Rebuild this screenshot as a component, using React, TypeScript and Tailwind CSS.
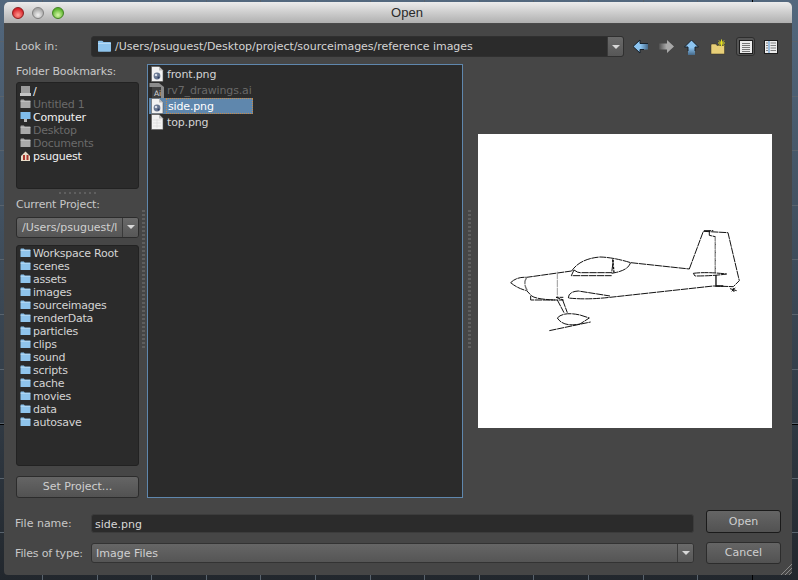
import React from 'react';

const projectDirs = [
  'Workspace Root',
  'scenes',
  'assets',
  'images',
  'sourceimages',
  'renderData',
  'particles',
  'clips',
  'sound',
  'scripts',
  'cache',
  'movies',
  'data',
  'autosave',
];

const Folder: React.FC<{ tone?: 'blue' | 'gray'; className?: string }> = ({
  tone = 'blue',
  className = 'w-[11px] h-[10px]',
}) => (
  <svg viewBox="0 0 11 10" className={`${className} shrink-0`}>
    <path
      d="M0.5 2 V1.2 Q0.5 0.5 1.2 0.5 H3.8 L4.8 1.6 H10 Q10.5 1.6 10.5 2.2 V8.5 Q10.5 9 10 9 H1 Q0.5 9 0.5 8.5 Z"
      fill={tone === 'blue' ? '#8fc4ec' : '#a9a9a9'}
    />
    <path d="M0.5 3 H10.5 V2.6 H0.5 Z" fill={tone === 'blue' ? '#dff0fb' : '#d4d4d4'} />
  </svg>
);

const DocIcon: React.FC<{ blank?: boolean }> = ({ blank }) => (
  <svg viewBox="0 0 14 16" className="w-[14px] h-[16px] shrink-0">
    <path d="M1.5 0.5 H9 L13 4.5 V15.5 H1.5 Z" fill="#f2f2f2" stroke="#555" strokeWidth="0.6" />
    <path d="M9 0.5 V4.5 H13 Z" fill="#bdbdbd" />
    {blank ? (
      <path d="M3 6 H11 M3 9 H11 M3 12 H11 M7 5 V14" stroke="#dadada" strokeWidth="0.7" />
    ) : (
      <>
        <circle cx="7" cy="10" r="3.4" fill="#66758f" />
        <circle cx="6" cy="9" r="1.3" fill="#d7dce8" />
        <circle cx="8.5" cy="11.5" r="1" fill="#2f3e66" />
      </>
    )}
  </svg>
);

const AiIcon = () => (
  <svg viewBox="0 0 16 16" className="w-[16px] h-[16px] shrink-0">
    <path d="M0.5 1 H10 L15 5 V16 H3 V5 H0.5 Z" fill="#8b8b8b" />
    <path d="M3 5 H12 V16 H3 Z" fill="#3f3f3f" />
    <text x="5" y="14" fontSize="7.5" fill="#d8d8d8" fontFamily="'DejaVu Sans', sans-serif">
      Ai
    </text>
  </svg>
);

const ComboArrow = () => (
  <div className="w-[16px] h-full flex items-center justify-center border-l border-[#3a3a3a] bg-gradient-to-b from-[#6a6a6a] to-[#575757]">
    <div className="w-0 h-0 border-l-[4px] border-r-[4px] border-t-[4px] border-l-transparent border-r-transparent border-t-[#d8d8d8]" />
  </div>
);

const DialogButton: React.FC<{ label: string; className: string }> = ({ label, className }) => (
  <div
    className={`${className} flex items-center justify-center pt-px rounded-[3px] border bg-gradient-to-b from-[#656565] to-[#525252] text-[11px] text-[#cfcfcf]`}
  >
    {label}
  </div>
);

const Sash = () => (
  <div className="w-[5px] h-full flex flex-col items-center pt-[146px]">
    <div className="w-[3px] h-[140px] bg-[repeating-linear-gradient(to_bottom,#5f5f5f_0px,#5f5f5f_2px,transparent_2px,transparent_4px)]" />
  </div>
);

const Arrow: React.FC<{ dir: 'left' | 'right' | 'up'; gray?: boolean; className?: string }> = ({
  dir,
  gray,
  className = '',
}) => {
  const id = `fade-${dir}`;
  const base = gray ? '#a8a8a8' : '#8cc4f0';
  const shapes = {
    left: { body: 'M1 7.5 L8 1 V4.5 H16 V10.5 H8 V14 Z', head: 'M16 4.5 H8 V1 L1 7.5 L8 14 V10.5 H12' },
    right: { body: 'M15 7.5 L8 1 V4.5 H0 V10.5 H8 V14 Z', head: 'M8 4.5 V1 L15 7.5 L8 14 V10.5' },
    up: { body: 'M7.5 1 L14.5 8 H11 V16 H4 V8 H0.5 Z', head: 'M4 12 V8 H0.5 L7.5 1 L14.5 8 H11 V12' },
  };
  return (
    <svg viewBox="0 0 16 16" className={`w-[16px] h-[16px] shrink-0 ${className}`}>
      <defs>
        <linearGradient
          id={id}
          x1={dir === 'right' ? '1' : '0'}
          x2={dir === 'right' ? '0' : dir === 'up' ? '0' : '1'}
          y1="0"
          y2={dir === 'up' ? '1' : '0'}
        >
          <stop offset="0" stopColor={base} />
          <stop offset="0.5" stopColor={base} />
          <stop offset="1" stopColor={gray ? '#505050' : '#45698a'} />
        </linearGradient>
      </defs>
      <path d={shapes[dir].body} fill={`url(#${id})`} />
      {!gray && <path d={shapes[dir].head} fill="none" stroke="#16202a" strokeWidth="1" />}
    </svg>
  );
};

const NewFolderIcon = () => (
  <svg viewBox="0 0 16 16" className="w-[16px] h-[16px] shrink-0 ml-[10px]">
    <path d="M1 6 Q1 5 2 5 H6 L7 6.5 H14.5 V15 H1 Z" fill="#e8cf78" stroke="#3a3320" strokeWidth="0.5" />
    <path d="M11.5 0.5 V7.5 M8 4 H15 M9 1.5 L14 6.5 M14 1.5 L9 6.5" stroke="#e6e020" strokeWidth="1" />
  </svg>
);

const DetailIcon: React.FC<{ split?: boolean }> = ({ split }) => (
  <svg viewBox="0 0 14 14" className="w-[14px] h-[14px]">
    <rect x="0.5" y="0.5" width="13" height="13" fill="#ececec" stroke="#1d1d1d" />
    {split ? (
      <>
        <path d="M2 3 H4 M2 5.5 H4 M2 8 H4 M2 10.5 H4" stroke="#7f7f7f" />
        <path d="M5 1 V13" stroke="#4d8fd0" />
        <path d="M6.5 3 H12 M6.5 5.5 H12 M6.5 8 H12 M6.5 10.5 H12" stroke="#7f7f7f" />
      </>
    ) : (
      <path d="M3 3.5 H11 M3 5.5 H11 M3 7.5 H11 M3 9.5 H11 M3 11.5 H11" stroke="#777" />
    )}
  </svg>
);

const Airplane = () => (
  <svg viewBox="0 0 294 294" className="w-[294px] h-[294px]">
    <g
      transform="translate(22 86) scale(0.3333)"
      fill="none"
      stroke="#111"
      strokeWidth="3"
      strokeDasharray="22 2"
    >
      <path d="M32 188 Q50 170 80 172 L215 153" />
      <path d="M32 188 Q52 205 80 212 L95 228 Q110 238 165 240" />
      <path d="M80 172 Q68 190 82 212" stroke="#777" strokeWidth="4" />
      <path d="M215 153 Q240 116 300 111 Q340 112 392 128 L568 147" />
      <path d="M222 150 Q235 160 245 158 H335 L340 120" />
      <path d="M392 128 Q385 150 345 158 L335 160" />
      <path d="M222 150 L214 167 H335" />
      <path d="M338 118 L342 158" strokeWidth="4" strokeDasharray="8 3" />
      <path d="M172 155 V232" stroke="#999" />
      <path d="M568 147 L610 34 L684 38 L718 182 L700 200 L640 198 L330 232 Q260 240 205 234 Q205 215 235 213 L330 228" />
      <path d="M612 32 H640 M628 32 V46 L646 50 V158" />
      <path d="M646 50 V158" stroke="#aaa" />
      <path d="M580 160 Q620 155 680 162 Q640 168 585 168 Z" />
      <path d="M648 165 V198 H670" strokeWidth="4" strokeDasharray="none" />
      <path d="M690 206 L710 212 M695 214 L706 204 M700 204 L702 216" strokeDasharray="none" />
      <path d="M92 228 V240 H190 L168 232 L190 232" />
      <path d="M172 240 L192 278 M188 240 L202 278" />
      <path d="M172 294 Q190 274 240 285 L268 294 L240 312 Q190 322 172 294 Z" />
      <path d="M148 332 L272 306" />
    </g>
  </svg>
);

export default function App() {
  return (
    <div
      className="w-[798px] h-[580px] overflow-hidden pt-[2px] pl-[4px] bg-[#2f343a] bg-[image:linear-gradient(to_bottom,transparent_424px,#000000_424px,#000000_425px,transparent_425px),linear-gradient(to_right,transparent_752px,#000000_752px,#000000_753px,transparent_753px),repeating-linear-gradient(to_right,#59636d_42px,#59636d_43px,transparent_43px,transparent_96.6px),repeating-linear-gradient(to_bottom,#59636d_41px,#59636d_42px,transparent_42px,transparent_95.6px),linear-gradient(to_bottom,#53687e_0px,#3e4c5a_260px,#22272d_580px)]"
      style={{ fontFamily: '"DejaVu Sans", "Liberation Sans", sans-serif' }}
    >
      <div className="w-[788px] h-[573px] flex flex-col rounded-t-[5px] rounded-b-[4px] overflow-hidden bg-[#464646] relative">
        {/* title bar */}
        <div className="h-[22px] shrink-0 flex items-center px-[8px] gap-[8px] border-b border-[#4a4a4a] bg-gradient-to-b from-[#ececec] to-[#b0b0b0]">
          <span className="w-[12px] h-[12px] rounded-full bg-[radial-gradient(circle_at_50%_70%,#ff9a90,#d8232a_70%)] border border-[#8a1c1c]" />
          <span className="w-[12px] h-[12px] rounded-full bg-[radial-gradient(circle_at_50%_70%,#f2f2f2,#a8a8a8_70%)] border border-[#808080]" />
          <span className="w-[12px] h-[12px] rounded-full bg-[radial-gradient(circle_at_50%_70%,#d8f7a8,#5cb52e_70%)] border border-[#3f8020]" />
          <div className="flex-1 text-center text-[13px] text-[#2a2a2a] mr-[42px] font-['Liberation_Sans',sans-serif]">Open</div>
        </div>

        <div className="flex-1 flex flex-col pl-[12px] pr-[11px]">
          {/* look in */}
          <div className="h-[21px] mt-[12px] flex items-center">
            <div className="-ml-px w-[76px] pt-[2px] text-[11px] text-[#c8c8c8]">Look in:</div>
            <div className="w-[533px] h-full flex rounded-[3px] border border-[#303030] overflow-hidden bg-[#2b2b2b]">
              <div className="flex-1 flex items-center pl-[5px] gap-[3px]">
                <Folder className="w-[15px] h-[13px]" />
                <span className="pt-[2px] text-[11px] tracking-[-0.03px] text-[#d4d4d4] whitespace-nowrap">
                  /Users/psuguest/Desktop/project/sourceimages/reference images
                </span>
              </div>
              <ComboArrow />
            </div>
            <div className="ml-[8px] flex items-center">
              <Arrow dir="left" />
              <Arrow dir="right" gray className="ml-[11px]" />
              <Arrow dir="up" className="ml-[9px]" />
              <NewFolderIcon />
            </div>
            <div className="ml-[10px] w-[19px] h-[19px] flex items-center justify-center rounded-[3px] border border-[#2e2e2e] bg-[#555555]">
              <DetailIcon />
            </div>
            <div className="ml-[9px]">
              <DetailIcon split />
            </div>
          </div>

          {/* main area */}
          <div className="h-[434px] mt-[7px] flex">
            <div className="w-[123px] flex flex-col">
              <div className="text-[11px] h-[18px] pt-[1px] leading-[13px] tracking-[-0.15px] text-[#c8c8c8]">Folder Bookmarks:</div>
              <div className="h-[107px] rounded-[3px] border border-[#222] bg-[#2b2b2b] pl-[3px] pt-[2px] text-[11px] leading-[13px] tracking-[-0.25px]">
                <div className="flex items-center gap-[2px] h-[13px] text-[#f0f0f0]">
                  <svg viewBox="0 0 11 10" className="w-[11px] h-[10px] shrink-0">
                    <rect x="1" y="0" width="9" height="7" fill="#9a9a9a" />
                    <rect x="0" y="7" width="11" height="3" fill="#c4c4c4" />
                  </svg>
                  <span>/</span>
                </div>
                <div className="flex items-center gap-[2px] h-[13px] text-[#6a6a6a]">
                  <Folder tone="gray" />
                  <span>Untitled 1</span>
                </div>
                <div className="flex items-center gap-[2px] h-[13px] text-[#f0f0f0]">
                  <svg viewBox="0 0 11 10" className="w-[11px] h-[10px] shrink-0">
                    <rect x="0.5" y="0" width="10" height="7" fill="#7fbcec" />
                    <rect x="4" y="7" width="3" height="3" fill="#bbb" />
                  </svg>
                  <span>Computer</span>
                </div>
                <div className="flex items-center gap-[2px] h-[13px] text-[#6a6a6a]">
                  <Folder tone="gray" />
                  <span>Desktop</span>
                </div>
                <div className="flex items-center gap-[2px] h-[13px] text-[#6a6a6a]">
                  <Folder tone="gray" />
                  <span>Documents</span>
                </div>
                <div className="flex items-center gap-[2px] h-[13px] text-[#f0f0f0]">
                  <svg viewBox="0 0 11 10" className="w-[11px] h-[10px] shrink-0">
                    <path d="M5.5 0.5 L10 5 V10 H1 V5 Z" fill="#e8dcc8" />
                    <path d="M3 4 H5 V9 H3 Z M6.5 4 H8.5 V9 H6.5 Z" fill="#a8352c" />
                  </svg>
                  <span>psuguest</span>
                </div>
              </div>
              <div className="h-[9px] flex items-center justify-center">
                <div className="w-[38px] h-[2px] bg-[repeating-linear-gradient(to_right,#5f5f5f_0px,#5f5f5f_2px,transparent_2px,transparent_5px)]" />
              </div>
              <div className="text-[11px] h-[19px] leading-[13px] tracking-[-0.15px] text-[#c8c8c8]">Current Project:</div>
              <div className="h-[21px] flex rounded-[3px] border border-[#2c2c2c] overflow-hidden bg-gradient-to-b from-[#666] to-[#555]">
                <div className="flex-1 overflow-hidden pl-[5px] text-[11px] leading-[20px] whitespace-nowrap text-[#d0d0d0]">
                  /Users/psuguest/l
                </div>
                <ComboArrow />
              </div>
              <div className="h-[222px] mt-[7px] rounded-[3px] border border-[#222] bg-[#2b2b2b] pl-[3px] pt-[1px] text-[11px] tracking-[-0.25px] text-[#d4d4d4]">
                {projectDirs.map((d) => (
                  <div key={d} className="flex items-center gap-[2px] h-[13px] leading-[13px]">
                    <Folder />
                    <span>{d}</span>
                  </div>
                ))}
              </div>
              <DialogButton label="Set Project..." className="h-[22px] mt-[10px] border-[#2c2c2c]" />
            </div>
            <div className="w-[8px] flex justify-center">
              <Sash />
            </div>
            <div className="w-[316px] border-[1.5px] border-[#5f87ad] bg-[#2b2b2b] pl-[1px] pt-[1px] text-[11px] tracking-[-0.15px] text-[#d4d4d4]">
              <div className="flex items-center gap-[3px] pl-[1px] h-[16px]">
                <DocIcon />
                <span className="pt-[2px]">front.png</span>
              </div>
              <div className="flex items-center gap-[2px] h-[16px] text-[#696969]">
                <AiIcon />
                <span className="pt-[2px]">rv7_drawings.ai</span>
              </div>
              <div className="flex items-center gap-[2px] pl-[1px] h-[16px] w-[104px] bg-[#5f87ad] text-white">
                <DocIcon />
                <span className="flex-1 h-full pl-[1px] leading-[15px] border border-dotted border-[#c98a45]">side.png</span>
              </div>
              <div className="flex items-center gap-[3px] pl-[1px] h-[16px]">
                <DocIcon blank />
                <span className="pt-[2px]">top.png</span>
              </div>
            </div>
            <div className="w-[8px] ml-[2px] flex justify-center">
              <Sash />
            </div>
            <div className="flex-1 flex items-center justify-start pl-[5px]">
              <div className="bg-white w-[294px] h-[294px]">
                <Airplane />
              </div>
            </div>
          </div>

          {/* file name / type */}
          <div className="flex mt-[12px]">
            <div className="flex-1 flex flex-col">
              <div className="flex items-center h-[19px] mt-[4px]">
                <div className="-ml-px w-[76px] pt-[2px] text-[11px] text-[#c8c8c8]">File name:</div>
                <div className="w-[603px] h-full rounded-[3px] border border-[#3c3c3c] bg-[#2b2b2b] pl-[3px] text-[11px] leading-[19px] text-[#d8d8d8]">
                  side.png
                </div>
              </div>
              <div className="flex items-center h-[20px] mt-[10px]">
                <div className="-ml-px w-[76px] pt-[2px] text-[11px] tracking-[-0.15px] text-[#c8c8c8]">Files of type:</div>
                <div className="w-[603px] h-full flex rounded-[3px] border border-[#333] overflow-hidden bg-gradient-to-b from-[#666] to-[#555]">
                  <div className="flex-1 pl-[4px] text-[11px] leading-[20px] text-[#d0d0d0]">Image Files</div>
                  <ComboArrow />
                </div>
              </div>
            </div>
            <div className="w-[75px] flex flex-col">
              <DialogButton label="Open" className="h-[23px] border-[#1a1a1a]" />
              <DialogButton label="Cancel" className="h-[22px] mt-[9px] border-[#2c2c2c]" />
            </div>
          </div>
        </div>

        {/* resize grip */}
        <svg viewBox="0 0 11 11" className="absolute right-0 bottom-0 w-[11px] h-[11px]">
          <path d="M0 11 L11 0 M4 11 L11 4 M8 11 L11 8" stroke="#8a8a8a" strokeWidth="1" />
        </svg>
      </div>
    </div>
  );
}
